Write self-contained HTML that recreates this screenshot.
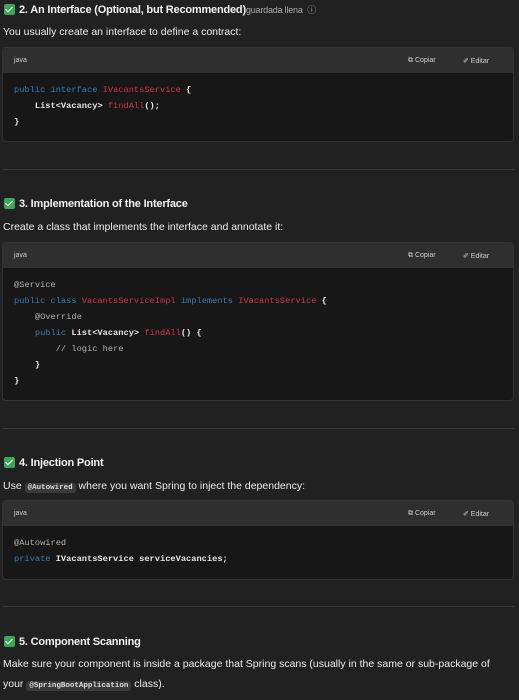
<!DOCTYPE html>
<html><head><meta charset="utf-8"><style>
*{margin:0;padding:0;box-sizing:border-box}
body{width:519px;height:700px;background:#212121;color:#ececec;font-family:"Liberation Sans",sans-serif;font-size:10.5px;position:relative;overflow:hidden}
.a{position:absolute;white-space:nowrap}
h3{position:absolute;font-size:11px;font-weight:bold;color:#f2f2f2;left:4px;white-space:nowrap;letter-spacing:-0.2px}
.ck{display:inline-block;width:11px;height:11px;background:#3aa757;border-radius:2px;vertical-align:-2px;margin-right:4px;position:relative}
.ck:after{content:"";position:absolute;left:3px;top:1px;width:3px;height:6px;border:solid #fff;border-width:0 1.5px 1.5px 0;transform:rotate(45deg)}
.cb{position:absolute;left:2px;width:512px;border:1px solid #333;border-radius:4px;background:#171717;overflow:hidden}
.hd{height:25px;background:#2f2f2f;position:relative;font-size:7px;color:#cfcfcf}
.hd .l{position:absolute;left:11px;top:9px}
.hd .c{position:absolute;left:405px;top:9px}
.hd .e{position:absolute;left:460px;top:9px}
pre{font-family:"Liberation Mono",monospace;font-size:8.7px;line-height:16px;padding:9px 11px;color:#e6e6e6;font-weight:bold}
.k{color:#2f7fb5;font-weight:normal}.t{color:#d0344a;font-weight:normal}.g{color:#b0b0b0;font-weight:normal}
.hr{position:absolute;left:2px;width:512px;height:1px;background:#3a3a3a}
code{font-family:"Liberation Mono",monospace;font-size:7.5px;background:#3a3a3a;border-radius:3px;padding:1px 3px;color:#ddd;font-weight:bold}
</style></head><body>
<h3 style="top:3px"><span class="ck"></span>2. An Interface (Optional, but Recommended)<span style="font-weight:normal;color:#aaa;font-size:9px">guardada llena &nbsp;ⓘ</span></h3>
<div class="a" style="left:3px;top:26px">You usually create an interface to define a contract:</div>
<div class="cb" style="top:47px;height:95px"><div class="hd"><span class="l">java</span><span class="c">⧉ Copiar</span><span class="e">✐ Editar</span></div>
<pre><span class="k">public interface</span> <span class="t">IVacantsService</span> {
    List&lt;Vacancy&gt; <span class="t">findAll</span>();
}</pre></div>
<div class="hr" style="top:169px"></div>
<h3 style="top:198px"><span class="ck"></span>3. Implementation of the Interface</h3>
<div class="a" style="left:3px;top:221px">Create a class that implements the interface and annotate it:</div>
<div class="cb" style="top:242px;height:159px"><div class="hd"><span class="l">java</span><span class="c">⧉ Copiar</span><span class="e">✐ Editar</span></div>
<pre><span class="g">@Service</span>
<span class="k">public class</span> <span class="t">VacantsServiceImpl</span> <span class="k">implements</span> <span class="t">IVacantsService</span> {
    <span class="g">@Override</span>
    <span class="k">public</span> List&lt;Vacancy&gt; <span class="t">findAll</span>() {
        <span class="g">// logic here</span>
    }
}</pre></div>
<div class="hr" style="top:428px"></div>
<h3 style="top:457px"><span class="ck"></span>4. Injection Point</h3>
<div class="a" style="left:3px;top:480px">Use <code>@Autowired</code> where you want Spring to inject the dependency:</div>
<div class="cb" style="top:500px;height:80px"><div class="hd"><span class="l">java</span><span class="c">⧉ Copiar</span><span class="e">✐ Editar</span></div>
<pre><span class="g">@Autowired</span>
<span class="k">private</span> IVacantsService serviceVacancies;</pre></div>
<div class="hr" style="top:606px"></div>
<h3 style="top:636px"><span class="ck"></span>5. Component Scanning</h3>
<div class="a" style="left:3px;top:658px">Make sure your component is inside a package that Spring scans (usually in the same or sub-package of</div>
<div class="a" style="left:3px;top:678px">your <code>@SpringBootApplication</code> class).</div>
</body></html>
